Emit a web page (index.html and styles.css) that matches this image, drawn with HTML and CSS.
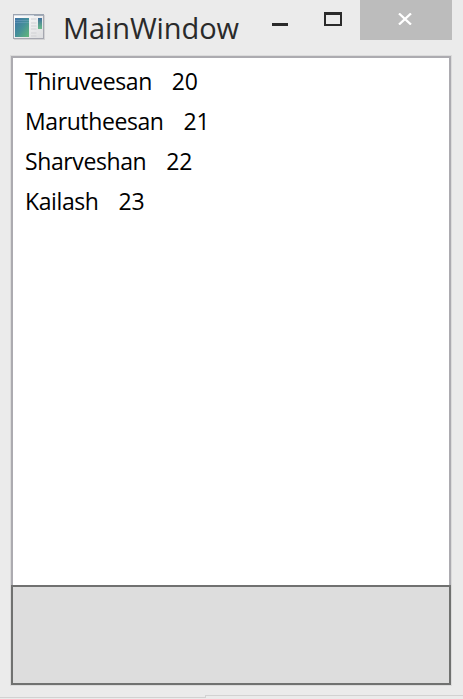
FILE: index.html
```html
<!DOCTYPE html>
<html lang="en">
<head>
<meta charset="utf-8">
<title>MainWindow</title>
<link rel="stylesheet" href="styles.css">
</head>
<body>
<div class="window">
  <header class="titlebar">
    <svg class="app-icon" width="32" height="26" viewBox="0 0 32 26">
      <defs>
        <linearGradient id="pane" x1="0" y1="0" x2="1" y2="1">
          <stop offset="0" stop-color="#3f72a5"/><stop offset=".5" stop-color="#45909a"/><stop offset="1" stop-color="#63b878"/>
        </linearGradient>
        <linearGradient id="strip" x1="0" y1="0" x2="0" y2="1">
          <stop offset="0" stop-color="#416f9e"/><stop offset="1" stop-color="#68bd88"/>
        </linearGradient>
        <linearGradient id="paper" x1="0" y1="0" x2="1" y2="1">
          <stop offset="0" stop-color="#fff"/><stop offset="1" stop-color="#dcdddf"/>
        </linearGradient>
      </defs>
      <path d="M1 1H32V26H1z" fill="#d2d2d3"/>
      <rect x=".5" y=".5" width="30" height="24" fill="url(#paper)" stroke="#a5a7b0"/>
      <path d="M0 .5H31" stroke="#9ba4b1"/>
      <path d="M1 1.5H21" stroke="#d5dce4"/>
      <path d="M21 1.5H30" stroke="#a3adba"/>
      <rect x="2" y="4" width="14" height="19" fill="url(#pane)"/>
      <path d="M2 6.5H16M2 8.5H16" stroke="#8bb5d2" stroke-opacity=".35"/>
      <path d="M18 5H23.500M18 9H23.500M18 12H23.500M18 15H23.500M18 19H23.500M18 22H23.500" stroke="#d0d1d4"/>
      <rect x="25" y="4" width="4" height="11" fill="url(#strip)"/>
    </svg>
    <h1 class="title">MainWindow</h1>
    <div class="controls">
      <svg class="minimize" width="16" height="3"><rect width="16" height="3" fill="#2a2a2a"/></svg>
      <svg class="maximize" width="18" height="14"><path d="M0 0H18V14H0zM2 3V12H16V3z" fill="#2a2a2a" fill-rule="evenodd"/></svg>
      <div class="close">
        <svg width="14" height="12" viewBox="0 0 14 12"><path d="M1 .5L13 11.500M13 .5L1 11.500" stroke="#fff" stroke-width="2.300"/></svg>
      </div>
    </div>
  </header>
  <main class="content">
    <ul class="list">
      <li><span>Thiruveesan</span><span class="age">20</span></li>
      <li><span>Marutheesan</span><span class="age">21</span></li>
      <li><span>Sharveshan</span><span class="age">22</span></li>
      <li><span>Kailash</span><span class="age">23</span></li>
    </ul>
    <div class="button"></div>
  </main>
  <footer class="edge"><div class="edge-left"></div><div class="edge-right"></div></footer>
</div>
</body>
</html>
```
FILE: styles.css
```css
* { box-sizing: border-box; }
body { margin: 0; background: #ebebeb; font-family: "Open Sans", "Noto Sans", sans-serif; }
.window { width: 463px; height: 699px; display: flex; flex-direction: column; overflow: hidden; }
.titlebar { height: 55px; flex: none; display: flex; align-items: flex-start; padding: 0 11px 0 13px; }
.app-icon { margin-top: 14px; flex: none; }
.title { margin: 8px 0 0 18px; width: 190px; font-size: 29px; font-weight: 400; line-height: 40px; color: #2a2a2a; letter-spacing: -0.1px; white-space: nowrap; }
.controls { margin-left: auto; display: flex; align-items: flex-start; }
.minimize { margin-top: 23px; }
.maximize { margin: 12px 18px 0 36px; }
.close { width: 92px; height: 40px; background: #bcbcbc; padding: 13px 0 0 38px; }
.close svg { display: block; }
.content { width: 442px; height: 631px; margin-left: 10px; border: 1px solid #dbdbdb; display: flex; flex-direction: column; flex: none; }
.list { margin: 0; padding: 3px 12px; height: 529px; border: 2px solid #acabb0; border-bottom: 0; background: #fff; list-style: none; font-size: 23px; font-weight: 400; letter-spacing: -0.4px; line-height: 40px; color: #000; }
.list li { display: flex; height: 40px; gap: 20px; white-space: nowrap; }
.age { letter-spacing: -0.2px; }
.button { height: 100px; border: 2px solid #707170; background: #ddd; }
.edge { display: flex; flex: 1; padding-top: 9px; }
.edge-left { width: 205px; margin-top: 2px; border-top: 1px solid #d2d2d2; }
.edge-right { flex: 1; border-top: 1px solid #d2d2d2; border-left: 1px solid #d2d2d2; height: 3px; }
```
